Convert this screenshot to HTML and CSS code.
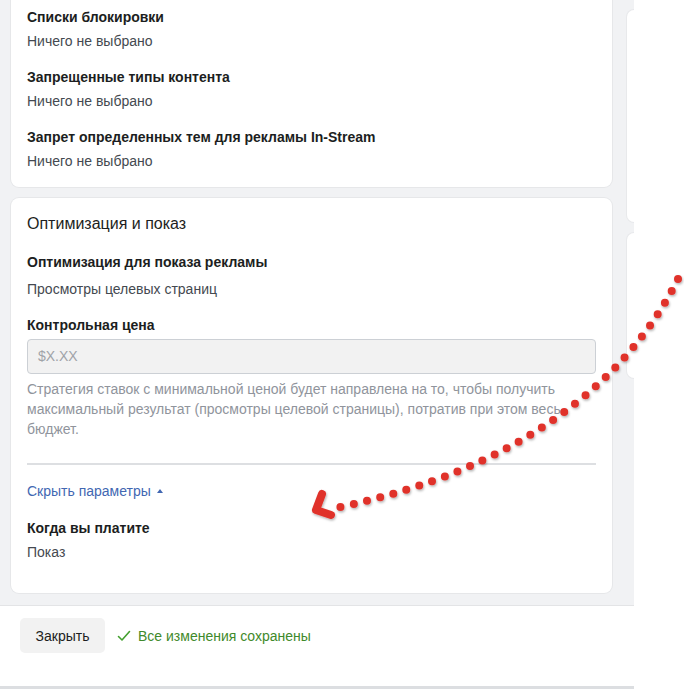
FILE: index.html
```html
<!DOCTYPE html>
<html lang="ru">
<head>
<meta charset="utf-8">
<title>Оптимизация и показ</title>
<link rel="stylesheet" href="styles.css">
</head>
<body>
<div class="panel">
  <div class="content">
    <div class="main">
      <section class="card card-top">
        <div class="item">
          <div class="label">Списки блокировки</div>
          <div class="value">Ничего не выбрано</div>
        </div>
        <div class="item">
          <div class="label">Запрещенные типы контента</div>
          <div class="value">Ничего не выбрано</div>
        </div>
        <div class="item">
          <div class="label">Запрет определенных тем для рекламы In-Stream</div>
          <div class="value">Ничего не выбрано</div>
        </div>
      </section>
      <section class="card card-opt">
        <h2 class="card-title">Оптимизация и показ</h2>
        <div class="label">Оптимизация для показа рекламы</div>
        <div class="value value-spaced">Просмотры целевых страниц</div>
        <div class="label label-price">Контрольная цена</div>
        <div class="input">$X.XX</div>
        <p class="help">Стратегия ставок с минимальной ценой будет направлена на то, чтобы получить максимальный результат (просмотры целевой страницы), потратив при этом весь бюджет.</p>
        <hr class="divider">
        <a class="toggle">Скрыть параметры <span class="caret"></span></a>
        <div class="label label-pay">Когда вы платите</div>
        <div class="value">Показ</div>
      </section>
    </div>
    <div class="side">
      <div class="side-card side-card-1"></div>
      <div class="side-card side-card-2"></div>
    </div>
  </div>
  <footer class="footer">
    <button class="btn">Закрыть</button>
    <span class="saved">
      <svg class="check" width="14" height="12" viewBox="0 0 14 12"><path d="M1.5 6.5 L5 10 L12.5 1.5" fill="none" stroke="#43a02f" stroke-width="1.6" stroke-linecap="round" stroke-linejoin="round"/></svg>
      Все изменения сохранены
    </span>
  </footer>
</div>
<svg class="annotation" width="684" height="689" viewBox="0 0 684 689">
  <defs>
    <filter id="sh" x="-20%" y="-20%" width="140%" height="140%">
      <feDropShadow dx="0.8" dy="1.5" stdDeviation="0.8" flood-color="#000" flood-opacity="0.3"/>
    </filter>
  </defs>
  <g filter="url(#sh)">
    <path d="M678 279 C625 385 515 470 340 507" fill="none" stroke="#e0322b" stroke-width="8" stroke-linecap="round" stroke-dasharray="0 13.6"/>
    <path d="M322 494 L316 510 L331 515" fill="none" stroke="#e0322b" stroke-width="8" stroke-linecap="round" stroke-linejoin="round"/>
  </g>
</svg>
</body>
</html>
```
FILE: styles.css
```css
* { box-sizing: border-box; }
html, body { margin: 0; padding: 0; background: #ffffff; }
body {
  font-family: "Liberation Sans", Arial, sans-serif;
  font-size: 14px;
  color: #1c1e21;
  width: 684px;
  height: 689px;
  overflow: hidden;
  position: relative;
}
.panel {
  width: 634px;
  height: 689px;
  background: #f1f2f4;
  display: flex;
  flex-direction: column;
  overflow: hidden;
  border-bottom: 3px solid #dcdee1;
}
.content {
  flex: 1;
  display: flex;
  gap: 15px;
  overflow: hidden;
}
.main {
  width: 612px;
  padding-left: 11px;
  display: flex;
  flex-direction: column;
  gap: 11px;
}
.side {
  flex: 1;
  padding-top: 10px;
  display: flex;
  flex-direction: column;
  gap: 11px;
}
.side-card {
  background: #fff;
  border-radius: 8px 0 0 8px;
  box-shadow: 0 0 0 1px #e8e9eb;
}
.side-card-1 { height: 212px; }
.side-card-2 { height: 145px; }
.card {
  background: #fff;
  border-radius: 8px;
  box-shadow: 0 0 0 1px #e6e7e9;
  padding-left: 16px;
  padding-right: 16px;
}
.card-top {
  border-radius: 0 0 8px 8px;
  height: 187px;
  padding-top: 5px;
}
.item + .item { margin-top: 12px; }
.label {
  font-weight: bold;
  font-size: 14px;
  line-height: 24px;
  color: #1c1e21;
}
.value {
  font-size: 14px;
  line-height: 24px;
  color: #444950;
}
.card-opt {
  height: 395px;
  padding-top: 14px;
}
.card-title {
  margin: 0 0 14px;
  font-size: 16px;
  font-weight: normal;
  line-height: 24px;
  color: #1c1e21;
}
.value-spaced { margin-top: 3px; }
.label-price { margin-top: 12px; }
.input {
  margin-top: 2px;
  height: 35px;
  border: 1px solid #ccd0d5;
  border-radius: 4px;
  background: #f2f2f2;
  color: #a0a3a8;
  font-size: 14px;
  line-height: 33px;
  padding-left: 10px;
}
.help {
  margin: 5px 0 0;
  font-size: 14px;
  line-height: 20px;
  color: #90949c;
}
.divider {
  margin: 24px 0 0;
  border: 0;
  border-top: 2px solid #dddfe2;
  height: 0;
}
.toggle {
  display: block;
  margin-top: 14px;
  font-size: 14px;
  line-height: 24px;
  color: #4267b2;
}
.caret {
  display: inline-block;
  width: 0;
  height: 0;
  border-left: 3.5px solid transparent;
  border-right: 3.5px solid transparent;
  border-bottom: 4px solid #4267b2;
  vertical-align: middle;
  margin-left: 2px;
  margin-top: -3px;
}
.label-pay { margin-top: 13px; }
.footer {
  height: 81px;
  background: #fff;
  border-top: 1px solid #e3e4e6;
  padding: 12px 0 0 20px;
  display: flex;
  align-items: flex-start;
  gap: 12px;
}
.btn {
  height: 35px;
  width: 85px;
  border: 0;
  border-radius: 5px;
  background: #f2f2f2;
  font-family: "Liberation Sans", Arial, sans-serif;
  font-size: 14px;
  color: #1c1e21;
  padding: 0;
}
.saved {
  display: flex;
  align-items: center;
  gap: 7px;
  height: 35px;
  font-size: 14px;
  color: #3f8a2b;
}
.check { display: block; }
.annotation {
  position: absolute;
  left: 0;
  top: 0;
  pointer-events: none;
}
```
